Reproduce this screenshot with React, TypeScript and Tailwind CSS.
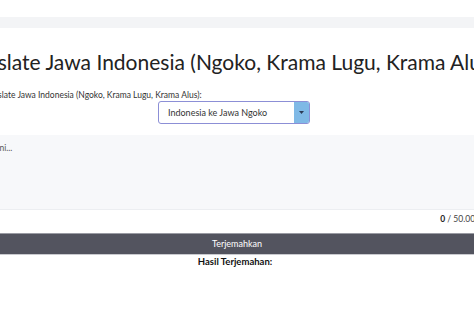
export default function App() {
  return (
    <div
      className="w-[474px] h-[320px] overflow-hidden bg-white text-[#212529]"
      style={{ fontFamily: 'Lato, "Noto Sans", sans-serif' }}
    >
      <div className="h-[17px]" />
      <div className="h-[11px] bg-[#f3f4f6]" />

      {/* Title */}
      <div className="mt-[20px] whitespace-nowrap">
        <h1 className="ml-[-42px] text-[21px] leading-[28px] font-normal text-[#222]">
          Translate Jawa Indonesia (Ngoko, Krama Lugu, Krama Alus)
        </h1>
      </div>

      {/* Label + select */}
      <div className="mt-[13px] whitespace-nowrap">
        <label className="block ml-[-18px] text-[8.5px] leading-[12px] text-[#333]">
          Translate Jawa Indonesia (Ngoko, Krama Lugu, Krama Alus):
        </label>
      </div>
      <div className="flex">
        <div className="ml-[158px] w-[152px] h-[23px] flex items-stretch border border-[#8c8fd6] rounded-[3px] overflow-hidden">
          <span className="flex-1 flex items-center pl-[9px] text-[9px] text-[#333]">
            Indonesia ke Jawa Ngoko
          </span>
          <span className="w-[15px] bg-[#7fb9e6] flex items-center justify-center">
            <svg width="5" height="3" viewBox="0 0 5 3">
              <path d="M0 0h5L2.5 3z" fill="#2b3a55" />
            </svg>
          </span>
        </div>
      </div>

      {/* Textarea */}
      <div className="mt-[11px] h-[75px] bg-[#f7f8fa] border-b border-[#eceef1] whitespace-nowrap">
        <p className="pt-[7px] ml-[-34px] text-[8.5px] text-[#555]">Tulis di sini...</p>
      </div>

      {/* Counter */}
      <div className="flex justify-end whitespace-nowrap mr-[-6px] mt-[3px] text-[8.5px] leading-[12px] text-[#444]">
        <span>
          <b className="text-[#222]">0</b> / 50.000
        </span>
      </div>

      {/* Button */}
      <button className="mt-[8px] w-full h-[22px] bg-[#53545f] border-t-[1.5px] border-b-[1.5px] border-t-[#9a9ba3] border-b-[#c9cacf] text-white text-[9px] flex items-center justify-center">
        Terjemahkan
      </button>

      <div className="text-center pr-[4px] text-[9.5px] leading-[13px] font-bold text-[#111]">
        Hasil Terjemahan:
      </div>
    </div>
  );
}
